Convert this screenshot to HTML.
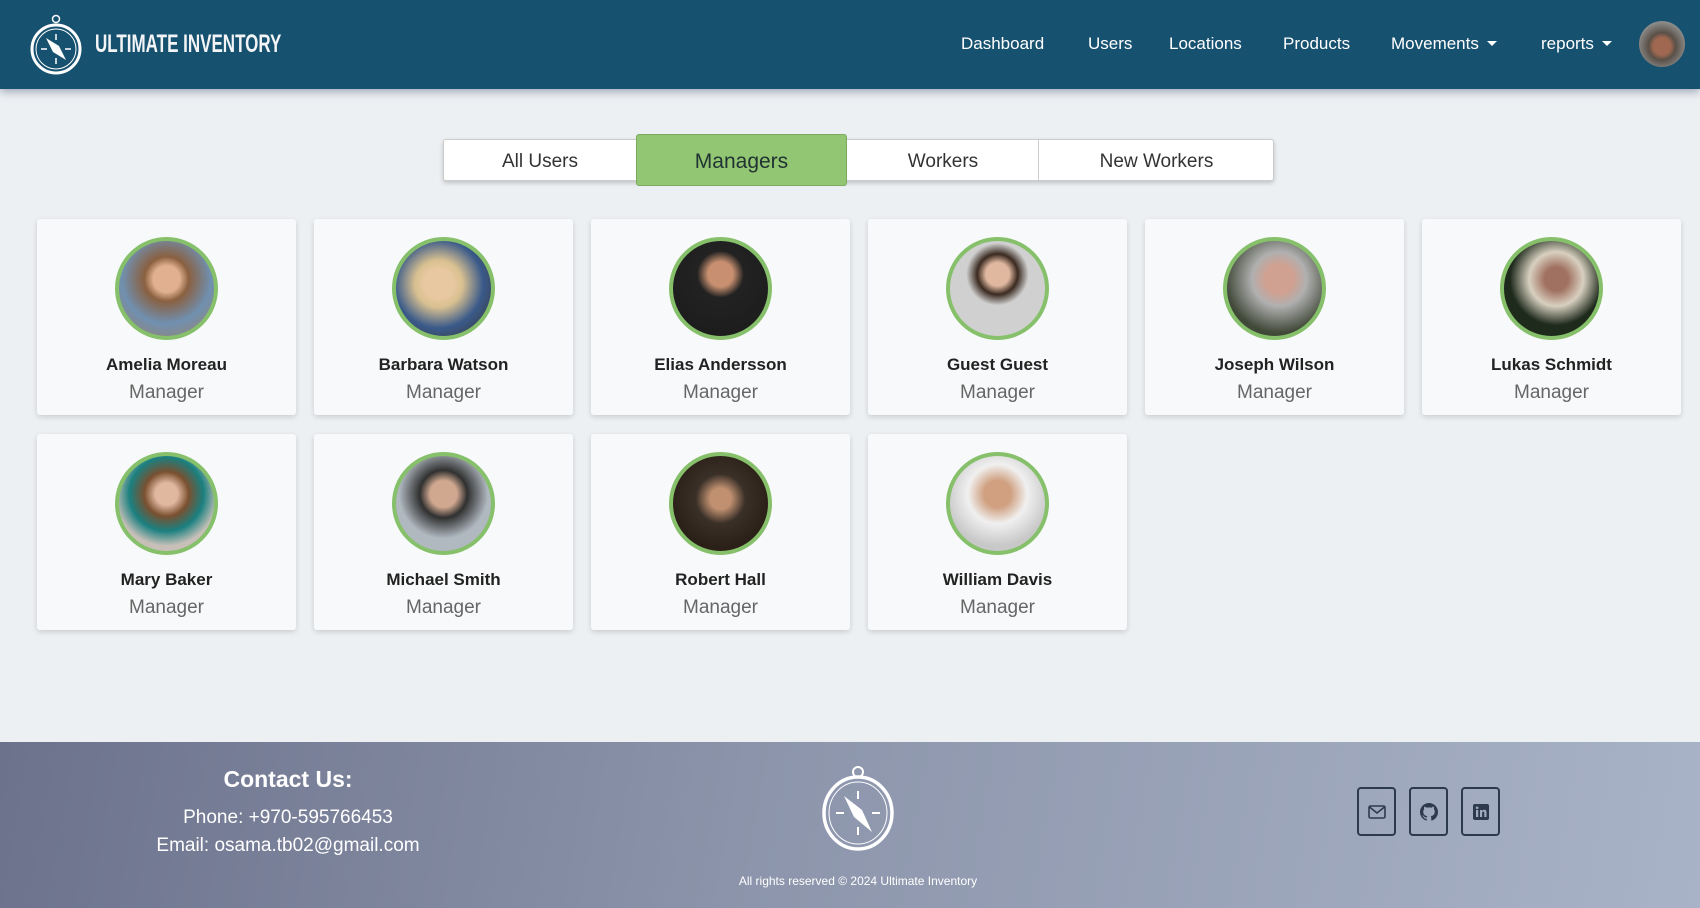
<!DOCTYPE html>
<html><head><meta charset="utf-8"><style>
*{margin:0;padding:0;box-sizing:border-box}
body{width:1700px;height:908px;background:#edf0f3;font-family:"Liberation Sans",sans-serif;position:relative;overflow:hidden}
.hdr{position:absolute;left:0;top:0;width:1700px;height:89px;background:#175170;box-shadow:0 3px 8px rgba(20,40,80,.35)}
.brand{position:absolute;left:95px;top:30px;color:#f2f4f6;font-weight:bold;font-size:25px;letter-spacing:0px;transform:scaleX(0.68);transform-origin:0 0;white-space:nowrap}
.nav{position:absolute;top:34px;color:#fff;font-size:17px}
.caret{display:inline-block;border-left:5px solid transparent;border-right:5px solid transparent;border-top:5px solid #fff;margin-left:8px;vertical-align:3px}
.tabs{position:absolute;left:443px;top:139px;width:831px;height:42px;background:#fff;border:1px solid #ccc;border-radius:3px;box-shadow:0 2px 5px rgba(0,0,0,.2)}
.tab{position:absolute;top:2px;height:40px;line-height:40px;text-align:center;font-size:19px;color:#333}
.sel{position:absolute;left:636px;top:134px;width:211px;height:52px;background:#92c673;border:1px solid #7aaa5e;border-radius:3px;line-height:54px;text-align:center;font-size:21px;color:#233}
.card{position:absolute;width:259px;height:196px;background:#f8f9fa;border-radius:3px;box-shadow:0 2px 6px rgba(0,0,0,.15)}
.av{position:absolute;left:78px;top:18px;width:103px;height:103px;border-radius:50%;border:4px solid #86c06a;overflow:hidden}
.nm{position:absolute;top:136px;width:100%;text-align:center;font-weight:bold;font-size:17px;color:#222}
.rl{position:absolute;top:163px;width:100%;text-align:center;font-size:19px;color:#666}
.ftr{position:absolute;left:0;top:742px;width:1700px;height:166px;background:linear-gradient(100deg,#6c728c 0%,#8c95ab 45%,#a9b3c7 100%)}
.ib{position:absolute;top:45px;width:39px;height:49px;border:2px solid #2d3a4e;border-radius:4px;display:flex;align-items:center;justify-content:center}
</style></head><body>
<div class="hdr">
<svg style="position:absolute;left:28px;top:14px" width="56" height="62" viewBox="0 0 56 62"><circle cx="28" cy="5" r="3.5" fill="none" stroke="#fff" stroke-width="1.5"/><circle cx="28" cy="35" r="24" fill="none" stroke="#fff" stroke-width="3"/><circle cx="28" cy="35" r="20" fill="none" stroke="#fff" stroke-width="1"/><path d="M18 24 L31 32 L38 46 L25 38Z" fill="#fff"/><path d="M28 20v6M28 44v6M13 35h6M37 35h6" stroke="#fff" stroke-width="1.5"/></svg>
<div class="brand">ULTIMATE INVENTORY</div>
<div class="nav" style="left:961px">Dashboard</div>
<div class="nav" style="left:1088px">Users</div>
<div class="nav" style="left:1169px">Locations</div>
<div class="nav" style="left:1283px">Products</div>
<div class="nav" style="left:1391px">Movements<span class="caret"></span></div>
<div class="nav" style="left:1541px">reports<span class="caret"></span></div>
<div style="position:absolute;left:1639px;top:21px;width:46px;height:46px;border-radius:50%;background:radial-gradient(circle at 50% 55%,#a06850 0 25%,#5a5048 40%,#8a8a88 70%)"></div>
</div>

<div class="tabs">
<div class="tab" style="left:0;width:192px">All Users</div>
<div class="tab" style="left:404px;width:191px;border-right:1px solid #ccc;top:0;line-height:44px">Workers</div>
<div class="tab" style="left:595px;width:235px">New Workers</div>
</div>
<div class="sel">Managers</div>

<div class="card" style="left:37px;top:219px"><div class="av" style="background:radial-gradient(circle at 50% 40%,#e0b090 0 18%,#8a6040 30%,#7090b0 60%,#a08060)"></div><div class="nm">Amelia Moreau</div><div class="rl">Manager</div></div>
<div class="card" style="left:314px;top:219px"><div class="av" style="background:radial-gradient(circle at 45% 45%,#e8c8a0 0 20%,#d8c090 32%,#3a5a8a 60%,#3a3028)"></div><div class="nm">Barbara Watson</div><div class="rl">Manager</div></div>
<div class="card" style="left:591px;top:219px"><div class="av" style="background:radial-gradient(circle at 50% 35%,#c89070 0 16%,#222 30%,#1a1a1a)"></div><div class="nm">Elias Andersson</div><div class="rl">Manager</div></div>
<div class="card" style="left:868px;top:219px"><div class="av" style="background:radial-gradient(circle at 50% 35%,#e0b8a0 0 15%,#3a2a20 26%,#d0d0d0 40%,#d0d0d0 60%),linear-gradient(#d0d0d0 65%,#e8901a 65%)"></div><div class="nm">Guest Guest</div><div class="rl">Manager</div></div>
<div class="card" style="left:1145px;top:219px"><div class="av" style="background:radial-gradient(circle at 55% 40%,#d0a090 0 18%,#b0b0b0 35%,#404838 70%)"></div><div class="nm">Joseph Wilson</div><div class="rl">Manager</div></div>
<div class="card" style="left:1422px;top:219px"><div class="av" style="background:radial-gradient(circle at 55% 40%,#a07060 0 15%,#d8d0c0 35%,#1e2a1c 60%)"></div><div class="nm">Lukas Schmidt</div><div class="rl">Manager</div></div>

<div class="card" style="left:37px;top:434px"><div class="av" style="background:radial-gradient(circle at 50% 40%,#e0b8a0 0 15%,#7a5030 30%,#1a8080 50%,#c8c0b8 70%)"></div><div class="nm">Mary Baker</div><div class="rl">Manager</div></div>
<div class="card" style="left:314px;top:434px"><div class="av" style="background:radial-gradient(circle at 50% 40%,#d0a890 0 18%,#303030 32%,#b0b8c0 60%)"></div><div class="nm">Michael Smith</div><div class="rl">Manager</div></div>
<div class="card" style="left:591px;top:434px"><div class="av" style="background:radial-gradient(circle at 50% 45%,#c09070 0 15%,#3a3028 35%,#2a2018 70%)"></div><div class="nm">Robert Hall</div><div class="rl">Manager</div></div>
<div class="card" style="left:868px;top:434px"><div class="av" style="background:radial-gradient(circle at 50% 40%,#d0a080 0 18%,#f0f0f0 40%,#c8c8c8 70%)"></div><div class="nm">William Davis</div><div class="rl">Manager</div></div>

<div class="ftr">
<div style="position:absolute;left:0;width:576px;top:24px;text-align:center;color:#fff;font-weight:bold;font-size:23px">Contact Us:</div>
<div style="position:absolute;left:0;width:576px;top:62px;text-align:center;color:#fff;font-size:19px;line-height:28px">Phone: +970-595766453<br>Email: osama.tb02@gmail.com</div>
<svg style="position:absolute;left:822px;top:22px" width="72" height="90" viewBox="0 0 72 90"><circle cx="36" cy="8" r="5" fill="none" stroke="#fff" stroke-width="2"/><ellipse cx="36" cy="49" rx="34" ry="36" fill="none" stroke="#fff" stroke-width="3.5"/><ellipse cx="36" cy="49" rx="29" ry="31" fill="none" stroke="#fff" stroke-width="1"/><path d="M22 32 L40 46 L50 68 L32 53Z" fill="#fff"/><path d="M36 27v8M36 63v8M14 49h8M50 49h8" stroke="#fff" stroke-width="2"/></svg>
<div style="position:absolute;left:0;width:1716px;top:132px;text-align:center;color:#fff;font-size:12px">All rights reserved © 2024 Ultimate Inventory</div>
<div class="ib" style="left:1357px"><svg width="18" height="14" viewBox="0 0 18 14"><rect x="1" y="1" width="16" height="12" rx="1.5" fill="none" stroke="#2d3a4e" stroke-width="1.6"/><path d="M1.5 2 L9 8 L16.5 2" fill="none" stroke="#2d3a4e" stroke-width="1.6"/></svg></div>
<div class="ib" style="left:1409px"><svg width="18" height="18" viewBox="0 0 16 16"><path fill="#2d3a4e" d="M8 0C3.58 0 0 3.58 0 8c0 3.540 2.29 6.53 5.47 7.59.4.07.55-.17.55-.38v-1.33c-2.230.48-2.7-1.070-2.7-1.070-.36-.92-.89-1.17-.89-1.17-.73-.5.05-.49.05-.49.8.06 1.23.83 1.23.83.71 1.22 1.870.87 2.330.66.07-.52.28-.87.51-1.070-1.78-.2-3.64-.89-3.64-3.95 0-.87.31-1.59.82-2.15-.08-.2-.36-1.020.08-2.12 0 0 .67-.21 2.2.82a7.6 7.6 0 0 1 4 0c1.53-1.040 2.2-.82 2.2-.82.44 1.1.16 1.92.08 2.12.51.56.82 1.27.82 2.15 0 3.070-1.87 3.75-3.65 3.95.29.25.54.73.54 1.48v2.2c0 .21.15.46.55.38A8 8 0 0 0 16 8c0-4.42-3.58-8-8-8"/></svg></div>
<div class="ib" style="left:1461px"><svg width="16" height="16" viewBox="0 0 16 16"><rect width="16" height="16" rx="2" fill="#2d3a4e"/><rect x="3" y="6" width="2.2" height="7" fill="#a0a9bd"/><circle cx="4.1" cy="3.8" r="1.3" fill="#a0a9bd"/><path d="M7 6h2.1v1c.4-.7 1.2-1.2 2.2-1.2 1.7 0 2.2 1.1 2.2 2.7V13h-2.2V9c0-.8-.2-1.4-1-1.4s-1.2.6-1.2 1.4v4H7z" fill="#a0a9bd"/></svg></div>
</div>
</body></html>
